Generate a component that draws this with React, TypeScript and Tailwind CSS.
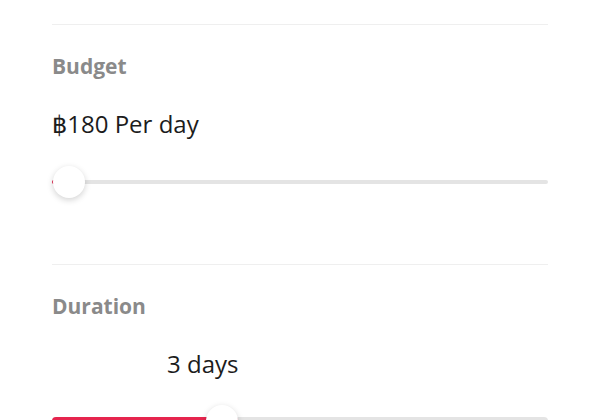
import React from "react";

const font = "font-['Open_Sans','Noto_Sans','DejaVu_Sans',sans-serif]";

const Slider = ({
  fill,
  thumbLeft,
  thick,
}: {
  fill: number;
  thumbLeft: number;
  thick: boolean;
}) => {
  return (
    <div
      className={`relative w-full rounded-full bg-[#e4e4e4] ${
        thick ? "h-2" : "h-[4px]"
      }`}
    >
      <div
        className="absolute left-0 top-0 h-full rounded-full bg-[#e6254e]"
        style={{ width: fill }}
      />
      <div
        className="absolute top-1/2 h-8 w-8 -translate-y-1/2 rounded-full bg-white shadow-[0_2px_6px_rgba(0,0,0,0.18)]"
        style={{ left: thumbLeft }}
      />
    </div>
  );
};

export default function App() {
  return (
    <div
      className={`h-[420px] w-[600px] overflow-hidden bg-white px-[52px] ${font}`}
    >
      <div className="pt-6">
        <div className="h-px bg-[#efefef]" />
      </div>

      <section>
        <h2 className="mt-[28px] text-[21px] font-bold leading-[26px] text-[#8a8a8a]">
          Budget
        </h2>
        <p className="mt-[30px] text-[24px] leading-[30px] text-[#1c1c1c]">
          ฿180 Per day
        </p>
        <div className="mt-[41px]">
          <Slider fill={6} thumbLeft={1} thick={false} />
        </div>
      </section>

      <div className="mt-[80px] h-px bg-[#efefef]" />

      <section>
        <h2 className="mt-[28px] text-[21px] font-bold leading-[26px] text-[#8a8a8a]">
          Duration
        </h2>
        <p className="ml-[115px] mt-[30px] text-[24px] leading-[30px] text-[#1c1c1c]">
          3 days
        </p>
        <div className="mt-[38px]">
          <Slider fill={186} thumbLeft={154} thick={true} />
        </div>
      </section>
    </div>
  );
}
